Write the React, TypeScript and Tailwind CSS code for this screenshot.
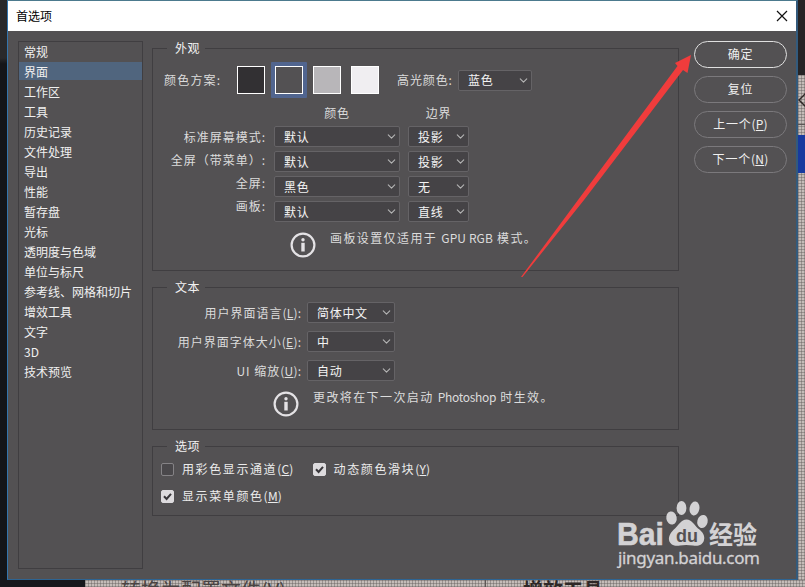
import type { ReactNode } from "react";
import { ChevronDown } from "lucide-react";

const CATEGORIES = [
  "常规",
  "界面",
  "工作区",
  "工具",
  "历史记录",
  "文件处理",
  "导出",
  "性能",
  "暂存盘",
  "光标",
  "透明度与色域",
  "单位与标尺",
  "参考线、网格和切片",
  "增效工具",
  "文字",
  "3D",
  "技术预览",
];

const SWATCHES = ["bg-[#323033]", "bg-[#535153]", "bg-[#b8b6b9]", "bg-[#f0eef1]"];

const SCREEN_LABELS = ["标准屏幕模式:", "全屏（带菜单）:", "全屏:", "画板:"];

const SCREEN_MODES = [
  { color: "默认", border: "投影" },
  { color: "默认", border: "投影" },
  { color: "黑色", border: "无" },
  { color: "默认", border: "直线" },
];

const TEXT_ROWS = [
  { label: "用户界面语言", hotkey: "L", value: "简体中文" },
  { label: "用户界面字体大小", hotkey: "E", value: "中" },
  { label: "UI 缩放", hotkey: "U", value: "自动" },
];

function Hotkey({ k }: { k: string }) {
  return (
    <span className="tracking-[0.2px]">
      (<span className="underline underline-offset-1">{k}</span>)
    </span>
  );
}

function Select({ value, className }: { value: string; className: string }) {
  return (
    <button
      type="button"
      className={`flex h-[21px] shrink-0 items-center justify-between rounded-[2px] border border-[#656366] bg-[#454346] pr-px pl-[9px] tracking-[0.7px] text-[#f4f4f4] ${className}`}
    >
      {value}
      <ChevronDown className="size-[13px] text-[#b5b5b5]" strokeWidth={2} />
    </button>
  );
}

function Group({ title, className, children }: { title: string; className: string; children: ReactNode }) {
  return (
    <fieldset className={`border border-[#403e41] ${className}`}>
      <legend className="ml-[14px] h-[18px] pr-[5px] pl-[8px] leading-[18px] tracking-[0.6px] text-[#f2f2f2]">
        {title}
      </legend>
      {children}
    </fieldset>
  );
}

function InfoIcon() {
  return (
    <svg viewBox="0 0 26 26" className="size-[26px] shrink-0" fill="none">
      <circle cx="13" cy="13" r="11.4" stroke="#e4e2e5" strokeWidth="2.2" />
      <circle cx="13" cy="7.8" r="1.7" fill="#e4e2e5" />
      <path d="M11.300 10.800h3.400v8.700H11.300z" fill="#e4e2e5" />
    </svg>
  );
}

function Checkbox({ label, hotkey, checked }: { label: string; hotkey: string; checked?: boolean }) {
  return (
    <label className="flex h-[18px] items-center gap-[8px] tracking-[1.6px] text-[#ececec]">
      <span
        className={`flex size-[13px] items-center justify-center rounded-[2px] border ${
          checked ? "border-[#dddbde] bg-[#dddbde]" : "border-[#858386] bg-[#4a484b]"
        }`}
      >
        {checked && (
          <svg viewBox="0 0 13 13" className="size-[13px] shrink-0" fill="none">
            <path d="M3 6.3l2.6 2.7L10 3.8" stroke="#38363a" strokeWidth="2" />
          </svg>
        )}
      </span>
      <span>
        {label}
        <Hotkey k={hotkey} />
      </span>
    </label>
  );
}

function PillButton({ primary, children }: { primary?: boolean; children: ReactNode }) {
  return (
    <button
      type="button"
      className={`h-[27px] w-[93px] rounded-full pb-px tracking-[0.8px] text-[#f0f0f0] ${
        primary ? "border border-[#e0e0e0]" : "border border-[#7b797c]"
      }`}
    >
      {children}
    </button>
  );
}

function Watermark() {
  return (
    <svg viewBox="0 0 150 75" className="absolute top-[498px] left-[614px] h-[75px] w-[150px]" fill="#d3d2d4">
      <text x="3" y="47" fontSize="32" fontWeight="700" stroke="#d3d2d4" strokeWidth="0.6" textLength="47" lengthAdjust="spacingAndGlyphs" fontFamily="Liberation Sans, sans-serif">
        Bai
      </text>
      <ellipse cx="57.5" cy="20" rx="5.2" ry="6.600" transform="rotate(-10 57.5 20)" />
      <ellipse cx="67.5" cy="10" rx="4.900" ry="7" />
      <ellipse cx="80.500" cy="10.5" rx="4.900" ry="7" transform="rotate(10 80.5 10.5)" />
      <ellipse cx="88.500" cy="23.5" rx="5.2" ry="6.600" transform="rotate(15 88.5 23.5)" />
      <path d="M72.500 21.500C78 21.500 80 27 84 30.500C89 34 91 38 90 42C89 47 84 48.500 79 47.500C74 46.800 70 46.800 66 47.500C61 48.500 56 47 55 42C54.500 38 57 34 61 30.500C65 27 67 21.500 72.500 21.500Z" />
      <text x="62" y="43.5" fontSize="18" fontWeight="700" fill="#535153" textLength="22" lengthAdjust="spacingAndGlyphs" fontFamily="Liberation Sans, sans-serif">
        du
      </text>
      <text x="95" y="46" fontSize="25" fontWeight="700" textLength="48" lengthAdjust="spacingAndGlyphs" fontFamily="Noto Sans CJK SC, sans-serif">
        经验
      </text>
      <text x="4" y="66" fontSize="17" textLength="142" stroke="#d3d2d4" strokeWidth="0.3" fontFamily="Noto Sans, sans-serif">
        jingyan.baidu.com
      </text>
    </svg>
  );
}

export default function App() {
  return (
    <div className="relative flex h-[587px] w-[805px] flex-col overflow-hidden bg-[#17181c] font-['Noto_Sans_CJK_SC',sans-serif] text-[12px] leading-[18px] text-[#dcdcdc]">
      <div className="flex h-[580px]">
        <div className="w-[7px] shrink-0 bg-linear-to-b from-[#29292b] from-10% to-[#141519] to-11%" />

        <div className="flex w-[791px] shrink-0 flex-col border-t border-r-2 border-b border-l border-t-[#4c7a8e] border-r-[#335a7c] border-b-[#2d6493] border-l-[#3475ad] bg-[#535153]">
          <header className="flex h-[30px] shrink-0 items-center justify-between bg-white pr-[8px] pb-px pl-[8px] text-black">
            <span>首选项</span>
            <svg viewBox="0 0 12 12" className="size-[12px]" stroke="#111" strokeWidth="1.2">
              <path d="M1 1l10 10M11 1L1 11" />
            </svg>
          </header>

          <main className="flex flex-1 pt-[8px] pl-[10px]">
            <ul className="mt-[2px] h-[528px] w-[125px] shrink-0 border border-[#403e41] text-[#f0f0f0]">
              {CATEGORIES.map((name) => (
                <li
                  key={name}
                  className={`pl-[5px] ${name === "界面" ? "mb-[2px] h-[18px] bg-[#50657e] leading-[19px]" : "h-[20px] leading-[20px]"}`}
                >
                  {name}
                </li>
              ))}
            </ul>

            <div className="ml-[9px] w-[527px] shrink-0">
              <Group title="外观" className="h-[232px]">
                <div className="flex h-[46px] items-center pl-[11px]">
                  <span className="w-[69px] tracking-[1.2px]">颜色方案:</span>
                  <div className="flex gap-[2px]">
                    {SWATCHES.map((bg, i) => (
                      <div key={bg} className={`size-[36px] p-[4px] ${i === 1 ? "rounded-[1px] bg-[#51658f]" : ""}`}>
                        <div className={`size-[28px] border border-white ${bg}`} />
                      </div>
                    ))}
                  </div>
                  <span className="ml-[14px] w-[61px] tracking-[0.9px]">高光颜色:</span>
                  <Select value="蓝色" className="w-[74px]" />
                </div>

                <div className="flex">
                  <div className="mt-[24.500px] flex w-[113px] flex-col gap-[5.200px] text-right tracking-[1px]">
                    {SCREEN_LABELS.map((label) => (
                      <span key={label} className="whitespace-nowrap">
                        {label}
                      </span>
                    ))}
                  </div>
                  <div className="ml-[8px] flex flex-col gap-[4px]">
                    <div className="flex h-[19px] gap-[8px] pt-px tracking-[0.8px]">
                      <span className="w-[126px] text-center">颜色</span>
                      <span className="w-[61px] text-center">边界</span>
                    </div>
                    {SCREEN_MODES.map((mode, i) => (
                      <div key={i} className="flex gap-[8px]">
                        <Select value={mode.color} className="w-[126px]" />
                        <Select value={mode.border} className="w-[61px]" />
                      </div>
                    ))}
                  </div>
                </div>

                <div className="mt-[7px] flex pl-[137px]">
                  <div className="mt-[3px]">
                    <InfoIcon />
                  </div>
                  <p className="ml-[14px] tracking-[1.400px]">
                    画板设置仅适用于 <span className="tracking-[0.100px]">GPU RGB</span> 模式。
                  </p>
                </div>
              </Group>

              <Group title="文本" className="mt-[7px] h-[152px]">
                <div className="flex flex-col gap-[8px] pt-[6px]">
                  {TEXT_ROWS.map((row) => (
                    <div key={row.hotkey} className="flex items-center">
                      <span className="w-[149px] text-right whitespace-nowrap tracking-[1px]">
                        {row.label}
                        <Hotkey k={row.hotkey} />:
                      </span>
                      <Select value={row.value} className="ml-[5px] w-[88px]" />
                    </div>
                  ))}
                </div>
                <div className="mt-[7px] flex pl-[120px]">
                  <div className="mt-[3px]">
                    <InfoIcon />
                  </div>
                  <p className="ml-[14px] tracking-[1.400px]">
                    更改将在下一次启动 <span className="tracking-[-0.300px]">Photoshop</span> 时生效。
                  </p>
                </div>
              </Group>

              <Group title="选项" className="mt-[7px] h-[79px]">
                <div className="flex flex-col gap-[9px] pt-[5px] pl-[8px]">
                  <div className="flex gap-[19px]">
                    <Checkbox label="用彩色显示通道" hotkey="C" />
                    <Checkbox label="动态颜色滑块" hotkey="Y" checked />
                  </div>
                  <Checkbox label="显示菜单颜色" hotkey="M" checked />
                </div>
              </Group>
            </div>

            <div className="mt-[2px] ml-[15px] flex shrink-0 flex-col gap-[8px]">
              <PillButton primary>确定</PillButton>
              <PillButton>复位</PillButton>
              <PillButton>
                上一个
                <Hotkey k="P" />
              </PillButton>
              <PillButton>
                下一个
                <Hotkey k="N" />
              </PillButton>
            </div>
          </main>
        </div>

        {/* slice of the window behind the dialog */}
        <div className="flex flex-1 flex-col bg-[#c4bcb8] bg-[repeating-linear-gradient(0deg,#5a555466_0_1px,transparent_1px_3px),repeating-linear-gradient(90deg,#5a555466_0_1px,transparent_1px_3px)]">
          <div className="h-[75px] bg-[#262426]" />
          <div className="flex h-[49px] items-center">
            <svg viewBox="0 0 7 16" className="h-[16px] w-[7px]" fill="none" stroke="#2e2625" strokeWidth="1.500">
              <path d="M8 1L1 8l7 7" />
            </svg>
          </div>
          <div className="h-[11px] border-t border-[#5c5655]" />
          <div className="h-[38px] bg-[#173a9f]" />
        </div>
      </div>

      <div className="flex h-[7px] overflow-hidden">
        <div className="w-[85px] shrink-0" />
        <div className="flex flex-1 bg-[#c4bcb8] bg-[repeating-linear-gradient(0deg,#5a555466_0_1px,transparent_1px_3px),repeating-linear-gradient(90deg,#5a555466_0_1px,transparent_1px_3px)] text-[20px] leading-[20px] text-[#4a4342]">
          <span className="ml-[36px] w-[364px] whitespace-nowrap">转换为配置文件(V)</span>
          <span className="w-[38px] border-l border-[#5c5655]" />
          <span className="font-bold text-[#2e2827]">增效工具</span>
        </div>
      </div>

      <svg viewBox="0 0 805 587" className="pointer-events-none absolute inset-0 h-[587px] w-[805px]">
        <polygon points="521,277 578,200 677.500,66 675,63 691,55 687.500,73 683,70 584,200 522.500,277" fill="#f03c3c" />
      </svg>
      <Watermark />
    </div>
  );
}
